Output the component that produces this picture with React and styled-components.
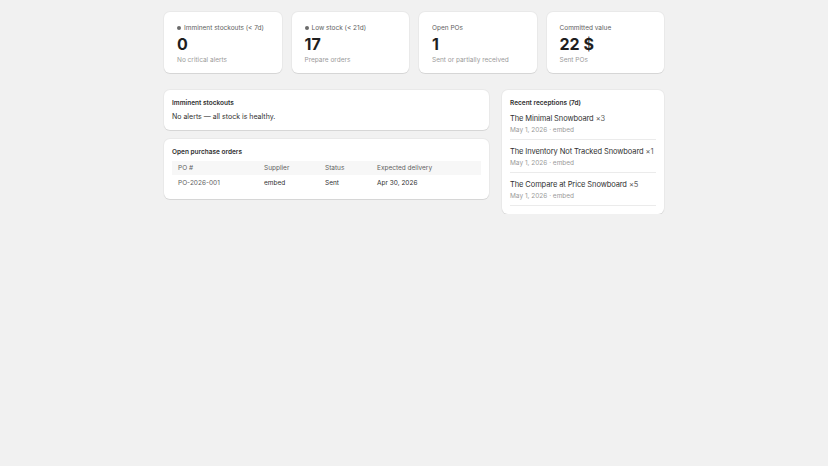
import React from "react";
import styled, { createGlobalStyle } from "styled-components";

const Global = createGlobalStyle`
  body { margin: 0; background: #f1f1f1; font-family: Inter, "Liberation Sans", sans-serif; color: #303030; }
`;

const Page = styled.div`
  width: 500px;
  margin: 0 auto;
  padding-top: 12px;
`;

const Stats = styled.div`
  display: grid;
  grid-template-columns: repeat(4, 1fr);
  gap: 10px;
`;

const Card = styled.div`
  background: #fff;
  border-radius: 6px;
  box-shadow: 0 1px 0 rgba(0,0,0,0.08), 0 0 0 1px rgba(0,0,0,0.03);
  padding: ${(p) => p.$pad || "12px 13px"};
  box-sizing: border-box;
`;

const StatLabel = styled.div`
  font-size: 6.5px;
  color: #616161;
  display: flex;
  align-items: center;
  gap: 3px;
  height: 9px;
  white-space: nowrap;
`;

const Dot = styled.span`
  width: 4px; height: 4px; border-radius: 50%; background: #6b6b6b; flex: none;
`;

const StatValue = styled.div`
  font-size: 16px;
  font-weight: 700;
  color: #1f1f1f;
  margin-top: 2px;
  line-height: 20px;
`;

const StatSub = styled.div`
  font-size: 6.5px;
  color: #9a9a9a;
  margin-top: 2px;
  white-space: nowrap;
`;

const Lower = styled.div`
  display: grid;
  grid-template-columns: 325px 1fr;
  gap: 13px;
  margin-top: 17px;
  align-items: start;
`;

const Col = styled.div`
  display: flex; flex-direction: column; gap: 9px;
`;

const Title = styled.div`
  font-size: 6.5px; font-weight: 600; color: #303030; white-space: nowrap;
`;

const Text = styled.div`
  font-size: 7px; font-weight: 400; color: #303030; margin-top: 5px;
`;

const Table = styled.table`
  width: 100%;
  border-collapse: collapse;
  margin-top: 5px;
  font-size: 6.5px;
  th { background: #f7f7f7; font-weight: 400; color: #616161; text-align: left; height: 14px; padding: 0 6px; }
  td { height: 16px; padding: 0 6px; color: #303030; font-weight: 400; }
  td:first-child { color: #616161; }
`;

const Item = styled.div`
  padding: 7px 0 5px;
  border-bottom: 1px solid #ebebeb;
`;

const ItemName = styled.div`
  font-size: 7.5px; font-weight: 400; color: #303030; white-space: nowrap; letter-spacing: -0.1px;
  span { color: #616161; }
`;

const ItemMeta = styled.div`
  font-size: 6.5px; color: #9a9a9a; margin-top: 3px;
`;

const stats = [
  { label: "Imminent stockouts (< 7d)", dot: true, value: "0", sub: "No critical alerts" },
  { label: "Low stock (< 21d)", dot: true, value: "17", sub: "Prepare orders" },
  { label: "Open POs", value: "1", sub: "Sent or partially received" },
  { label: "Committed value", value: "22 $", sub: "Sent POs" },
];

const receptions = [
  ["The Minimal Snowboard", "×3"],
  ["The Inventory Not Tracked Snowboard", "×1"],
  ["The Compare at Price Snowboard", "×5"],
];

export default function App() {
  return (
    <>
      <Global />
      <Page>
        <Stats>
          {stats.map((s) => (
            <Card key={s.label} $pad="11px 13px 9px">
              <StatLabel>{s.dot && <Dot />}{s.label}</StatLabel>
              <StatValue>{s.value}</StatValue>
              <StatSub>{s.sub}</StatSub>
            </Card>
          ))}
        </Stats>
        <Lower>
          <Col>
            <Card $pad="9px 8px 9px">
              <Title>Imminent stockouts</Title>
              <Text>No alerts — all stock is healthy.</Text>
            </Card>
            <Card $pad="9px 8px 8px">
              <Title>Open purchase orders</Title>
              <Table>
                <thead>
                  <tr><th style={{ width: 74 }}>PO #</th><th style={{ width: 49 }}>Supplier</th><th style={{ width: 40 }}>Status</th><th>Expected delivery</th></tr>
                </thead>
                <tbody>
                  <tr><td>PO-2026-001</td><td>embed</td><td>Sent</td><td>Apr 30, 2026</td></tr>
                </tbody>
              </Table>
            </Card>
          </Col>
          <Card $pad="9px 8px 8px">
            <Title>Recent receptions (7d)</Title>
            {receptions.map(([n, q]) => (
              <Item key={n}>
                <ItemName>{n} <span>{q}</span></ItemName>
                <ItemMeta>May 1, 2026 · embed</ItemMeta>
              </Item>
            ))}
          </Card>
        </Lower>
      </Page>
    </>
  );
}
